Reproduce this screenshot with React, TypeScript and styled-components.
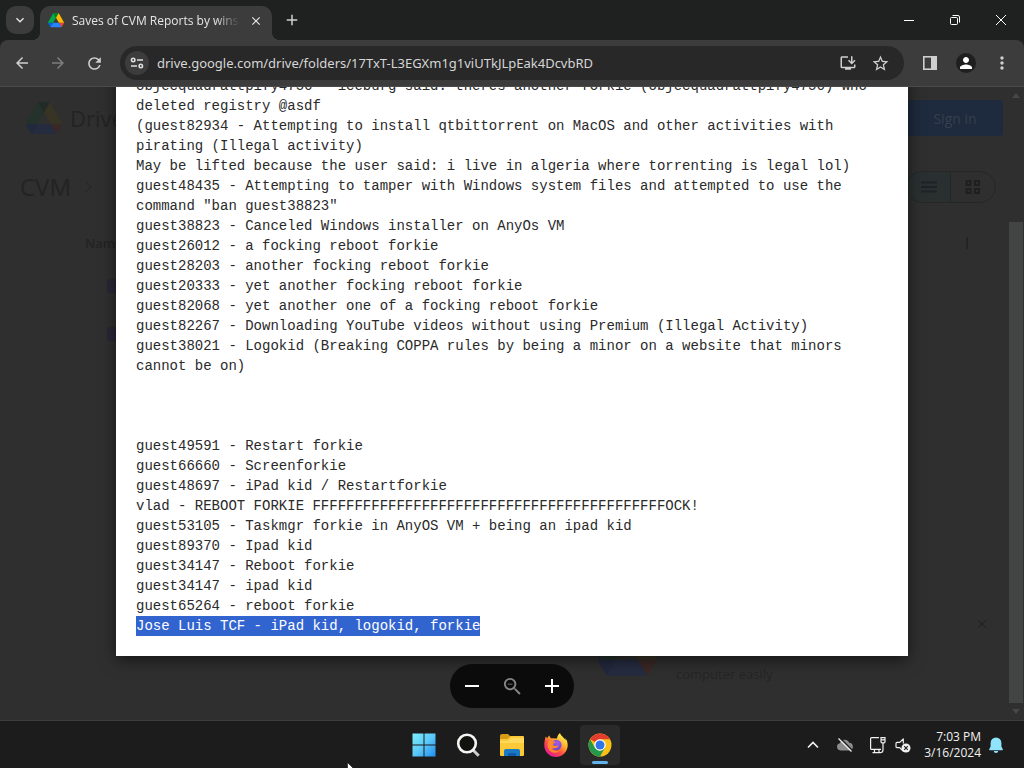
import React from "react";
import styled, { createGlobalStyle, css } from "styled-components";
import {
  MdAdd,
  MdArrowBack,
  MdArrowForward,
  MdClose,
  MdExpandMore,
  MdMoreVert,
  MdOutlineInstallDesktop,
  MdPerson,
  MdRefresh,
  MdRemove,
  MdStarBorder,
  MdZoomOut,
} from "react-icons/md";

const GlobalStyle = createGlobalStyle`
  * { box-sizing: border-box; }
  body {
    margin: 0;
    background: #1c1c1c;
    color: #e6e6e6;
    font-family: "Open Sans", "Noto Sans", sans-serif;
  }
  button {
    border: 0;
    padding: 0;
    background: none;
    color: inherit;
    font: inherit;
  }
  svg { display: block; flex: none; }
`;

const Desktop = styled.div`
  position: relative;
  display: flex;
  flex-direction: column;
  height: 100vh;
  overflow: hidden;
`;

/* ---------- Browser chrome ---------- */

const TabStrip = styled.header`
  display: flex;
  align-items: center;
  height: 40px;
  padding-left: 6px;
  background: #1f2020;
`;

const TabSearch = styled.button`
  display: grid;
  place-items: center;
  width: 28px;
  height: 28px;
  border-radius: 10px;
  background: #3c3c3c;
`;

const Tab = styled.div`
  position: relative;
  display: flex;
  align-items: center;
  gap: 8px;
  align-self: flex-end;
  width: 232px;
  height: 34px;
  margin-left: 6px;
  padding: 0 8px 5px;
  border-radius: 10px 10px 0 0;
  background: #3c3c3c;

  &::before,
  &::after {
    content: "";
    position: absolute;
    bottom: 0;
    width: 8px;
    height: 8px;
  }
  &::before {
    right: 100%;
    background: radial-gradient(circle at 0 0, transparent 8px, #3c3c3c 8px);
  }
  &::after {
    left: 100%;
    background: radial-gradient(circle at 100% 0, transparent 8px, #3c3c3c 8px);
  }
`;

const TabTitle = styled.span`
  flex: 1;
  overflow: hidden;
  white-space: nowrap;
  font-size: 12px;
  line-height: 16px;
  mask-image: linear-gradient(90deg, #000 85%, transparent);
`;

const TabButton = styled.button`
  display: grid;
  place-items: center;
  width: 16px;
  height: 16px;
`;

const NewTab = styled.button`
  display: grid;
  place-items: center;
  width: 28px;
  height: 28px;
  margin-left: 6px;
  color: #d0d0d0;
`;

const WindowControls = styled.div`
  display: flex;
  margin-left: auto;
`;

const WindowButton = styled.button`
  display: grid;
  place-items: center;
  width: 46px;
  height: 40px;
  color: #fff;
`;

const ToolbarBack = styled.div`
  background: #1f2020;
`;

const Toolbar = styled.nav`
  display: flex;
  align-items: center;
  height: 47px;
  padding: 0 4px;
  border-bottom: 1px solid #4a4a4a;
  border-radius: 8px 8px 0 0;
  background: #3c3c3c;
`;

const ToolButton = styled.button<{ $dim?: boolean }>`
  display: grid;
  place-items: center;
  flex: none;
  width: 36px;
  height: 34px;
  color: ${(p) => (p.$dim ? "#7d7d7d" : "#cfcfcf")};
`;

const Omnibox = styled.div`
  display: flex;
  align-items: center;
  flex: 1;
  height: 34px;
  margin: 0 8px;
  padding: 0 8px 0 5px;
  border-radius: 17px;
  background: #282828;
`;

const SiteInfo = styled.button`
  display: grid;
  place-items: center;
  width: 24px;
  height: 24px;
  border-radius: 12px;
  background: #3c3c3c;
`;

const Address = styled.input`
  flex: 1;
  min-width: 0;
  height: 24px;
  padding: 0 8px;
  border: 0;
  outline: 0;
  background: none;
  color: #d6d6d6;
  font-family: "Noto Sans", "Open Sans", sans-serif;
  font-size: 13px;
`;

const OmniAction = styled.button`
  display: grid;
  place-items: center;
  width: 32px;
  height: 32px;
  color: #cfcfcf;
`;

const Avatar = styled.span`
  display: grid;
  place-items: center;
  width: 20px;
  height: 20px;
  border-radius: 50%;
  background: #1f1f1f;
  color: #fff;
`;

/* ---------- Dimmed Drive page ---------- */

const Viewport = styled.main`
  position: relative;
  flex: 1;
  min-height: 0;
  overflow: hidden;
  background: #2f2f2f;
`;

const DrivePage = styled.div`
  display: flex;
  height: 100%;
`;

const DriveContent = styled.div`
  display: flex;
  flex-direction: column;
  flex: 1;
  color: #232323;
`;

const DriveHeader = styled.div`
  display: flex;
  align-items: center;
  gap: 8px;
  height: 62px;
  padding: 0 5px 0 26px;
`;

const DriveName = styled.span`
  font-size: 22px;
  line-height: 28px;
`;

const SignIn = styled.button`
  width: 96px;
  height: 36px;
  margin-left: auto;
  border-radius: 4px;
  background: #1e2a3d;
  color: #35404f;
  font-size: 14px;
`;

const CrumbRow = styled.div`
  display: flex;
  align-items: center;
  height: 76px;
  padding: 0 8px 0 20px;
`;

const Crumb = styled.span`
  margin-right: 14px;
  font-size: 24px;
  line-height: 28px;
`;

const ViewToggle = styled.div`
  display: flex;
  margin-left: auto;
  margin-right: 4px;
  border: 1px solid #252727;
  border-radius: 16px;
  overflow: hidden;
`;

const ViewButton = styled.button<{ $on?: boolean }>`
  display: grid;
  place-items: center;
  width: 44px;
  height: 30px;
  ${(p) =>
    p.$on &&
    css`
      border-right: 1px solid #252727;
      background: #2a3030;
    `}
`;

const ListHead = styled.div`
  display: flex;
  justify-content: space-between;
  align-items: center;
  height: 36px;
  padding: 0 40px 0 85px;
  font-size: 13px;
  font-weight: 600;
`;

const Divider = styled.span`
  width: 2px;
  height: 12px;
  background: #242424;
`;

const FileList = styled.div`
  display: flex;
  flex-direction: column;
  gap: 34px;
  padding: 18px 0 0 107px;
`;

const FileIcon = styled.span`
  width: 16px;
  height: 14px;
  border-radius: 2px;
  background: #272738;
`;

const Promo = styled.aside`
  display: flex;
  gap: 20px;
  height: 110px;
  margin-top: auto;
  padding: 6px 17px 0 0;
  justify-content: flex-end;
`;

const PromoText = styled.p`
  flex: none;
  width: 259px;
  margin: 0;
  padding-top: 50px;
  font-size: 13px;
  line-height: 16px;
  color: #252525;
`;

const PromoLogo = styled.div`
  padding-top: 8px;
`;

const PromoClose = styled.button`
  align-self: flex-start;
  width: 16px;
  height: 16px;
  margin-left: 20px;
`;

const ScrollTrack = styled.div`
  display: flex;
  flex-direction: column;
  align-items: center;
  flex: none;
  width: 16px;
  padding: 6px 0;
`;

const ScrollThumb = styled.div`
  flex: 1;
  width: 14px;
  margin: 124px 0 6px;
  background: #434444;
`;

/* ---------- Text preview ---------- */

const Preview = styled.div`
  position: absolute;
  inset: 0;
  display: flex;
  flex-direction: column;
  justify-content: flex-end;
  align-items: center;
  padding-bottom: 12px;
`;

const Paper = styled.article`
  width: calc(100% - 232px);
  max-width: 792px;
  padding: 20px;
  background: #fff;
  box-shadow: 0 4px 14px rgba(0, 0, 0, 0.55);
  color: #2a2a2a;
  font-family: "Liberation Mono", monospace;
  font-size: 14px;
  line-height: 20px;
`;

const Line = styled.p`
  min-height: 20px;
  margin: 0;
  overflow-wrap: anywhere;
`;

const Selected = styled.mark`
  display: inline-block;
  background: #3264d0;
  color: #fff;
`;

const ZoomBar = styled.div`
  display: flex;
  align-items: center;
  justify-content: space-between;
  flex: none;
  width: 124px;
  height: 44px;
  margin-top: 8px;
  padding: 0 8px;
  border-radius: 22px;
  background: #0b0b0b;
`;

const ZoomButton = styled.button<{ $dim?: boolean }>`
  display: grid;
  place-items: center;
  width: 28px;
  height: 28px;
  color: ${(p) => (p.$dim ? "#858585" : "#fff")};
`;

/* ---------- Taskbar ---------- */

const Taskbar = styled.footer`
  display: grid;
  grid-template-columns: 1fr auto 1fr;
  align-items: center;
  flex: none;
  height: 48px;
  border-top: 1px solid #3d3d3d;
  background: #1c1c1c;
`;

const Apps = styled.div`
  grid-column: 2;
  display: flex;
  gap: 4px;
`;

const AppButton = styled.button<{ $active?: boolean }>`
  position: relative;
  display: grid;
  place-items: center;
  width: 40px;
  height: 40px;
  border-radius: 4px;
  ${(p) =>
    p.$active &&
    css`
      background: #2a2a2a;
      &::after {
        content: "";
        position: absolute;
        left: 12px;
        bottom: 1px;
        width: 16px;
        height: 3px;
        border-radius: 2px;
        background: #5fb2e8;
      }
    `}
`;

const Tray = styled.div`
  display: flex;
  align-items: center;
  justify-content: flex-end;
  padding-right: 20px;
`;

const TrayButton = styled.button<{ $w?: number }>`
  display: grid;
  place-items: center;
  flex: none;
  width: ${(p) => p.$w ?? 26}px;
  height: 40px;
  color: #f2f2f2;
`;

const Clock = styled.time`
  width: 68px;
  margin-right: 7px;
  color: #f2f2f2;
  font-size: 12px;
  line-height: 16px;
  text-align: right;
  white-space: nowrap;
`;

const Pointer = styled.svg`
  position: absolute;
  left: 347px;
  bottom: -12px;
`;

/* ---------- Drawings ---------- */

const DriveLogo = ({ size, dim }: { size: number; dim?: boolean }) => {
  const c = dim
    ? { g: "#23322a", y: "#383425", b: "#252c40", r: "#3a2826", d: "#22283e", e: "#212c26" }
    : { g: "#00ac47", y: "#ffba00", b: "#2684fc", r: "#ea4335", d: "#0066da", e: "#00832d" };
  return (
    <svg width={size} height={size * 0.9} viewBox="0 0 87.3 78" aria-hidden="true">
      <path fill={c.d} d="m6.6 66.85 3.85 6.65c.8 1.4 1.95 2.5 3.3 3.3l13.75-23.8h-27.5c0 1.55.4 3.1 1.2 4.5z" />
      <path fill={c.g} d="m43.65 25-13.75-23.8c-1.35.8-2.5 1.9-3.3 3.3l-25.4 44a9.06 9.06 0 0 0 -1.2 4.5h27.5z" />
      <path fill={c.r} d="m73.55 76.8c1.35-.8 2.5-1.9 3.3-3.3l1.6-2.75 7.65-13.25c.8-1.4 1.2-2.95 1.2-4.5h-27.5l5.85 11.5z" />
      <path fill={c.e} d="m43.65 25 13.75-23.8c-1.35-.8-2.9-1.2-4.5-1.2h-18.5c-1.6 0-3.15.45-4.5 1.2z" />
      <path fill={c.b} d="m59.8 53h-32.3l-13.75 23.8c1.35.8 2.9 1.2 4.5 1.2h50.8c1.6 0 3.15-.45 4.5-1.2z" />
      <path fill={c.y} d="m73.4 26.5-12.7-22c-.8-1.4-1.95-2.5-3.3-3.3l-13.75 23.8 16.15 28h27.45c0-1.55-.4-3.1-1.2-4.5z" />
    </svg>
  );
};

const SiteControlsIcon = () => (
  <svg width="14" height="14" viewBox="0 0 14 14" fill="none" stroke="#dedede" strokeWidth="1.6">
    <circle cx="3.2" cy="4" r="1.7" />
    <path d="M7 4h6M1 10h6" />
    <circle cx="10.8" cy="10" r="1.7" />
  </svg>
);

const SidePanelIcon = () => (
  <svg width="16" height="16" viewBox="0 0 16 16">
    <rect x="1.8" y="1.8" width="12.4" height="12.4" fill="none" stroke="#cfcfcf" strokeWidth="1.6" />
    <path fill="#cfcfcf" d="M9 2h5v12H9z" />
  </svg>
);

const WindowsLogo = () => (
  <svg width="24" height="24" viewBox="0 0 24 24">
    <defs>
      <linearGradient id="win" x1="0" y1="0" x2="24" y2="24" gradientUnits="userSpaceOnUse">
        <stop offset="0" stopColor="#7df0fb" />
        <stop offset=".5" stopColor="#5bc9f8" />
        <stop offset="1" stopColor="#1d8bee" />
      </linearGradient>
    </defs>
    <path fill="url(#win)" d="M.5.5h11v11H.5zM12.5.5h11v11h-11zM.5 12.5h11v11H.5zM12.5 12.5h11v11h-11z" />
  </svg>
);

const SearchLogo = () => (
  <svg width="24" height="24" viewBox="0 0 24 24" fill="none">
    <path d="M17 17l5.700 5.700" stroke="#cfcfcf" strokeWidth="3" />
    <circle cx="11" cy="10.500" r="8.800" fill="#11120e" stroke="#f5f5f5" strokeWidth="2.600" />
  </svg>
);

const FolderLogo = () => (
  <svg width="26" height="24" viewBox="0 0 26 24">
    <path fill="#d79b16" d="M1 3q0-2 2-2h6l3 3v4H1z" />
    <path fill="#fbc938" d="M1 7q0-1 1-1h6.500l3-3H24q1 0 1 1v18q0 1-1 1H2q-1 0-1-1z" />
    <path fill="#ffd95c" d="M1 8h8l3-3h13v5H1z" />
    <path fill="#1979c4" d="M5 23v-5q0-2 2-2h12q2 0 2 2v5z" />
    <path fill="#0f5da8" d="M9 20h8v3H9z" />
  </svg>
);

const FirefoxLogo = () => (
  <svg width="24" height="24" viewBox="0 0 24 24">
    <defs>
      <linearGradient id="fox" x1="19" y1="2" x2="5" y2="21" gradientUnits="userSpaceOnUse">
        <stop offset="0" stopColor="#fff04a" />
        <stop offset=".35" stopColor="#ffb02e" />
        <stop offset=".65" stopColor="#ff5040" />
        <stop offset="1" stopColor="#e4208c" />
      </linearGradient>
      <radialGradient id="globe" cx=".6" cy=".3" r=".8">
        <stop offset="0" stopColor="#a45bea" />
        <stop offset="1" stopColor="#5a45c8" />
      </radialGradient>
    </defs>
    <path
      fill="url(#fox)"
      d="M16 0c-2 1.500-3 3.800-3 5.500L7 5.300C6 4.600 5.500 3.500 5.600 2.600 4.300 3.300 3.600 4.400 3.300 5.300L1.700 3.600C.8 6.500.3 9.500.3 12.200.3 18.800 5.500 24 12 24s11.700-5.200 11.700-11.700c0-3-1-5.700-2.400-7.300.2 1 .3 1.700.2 2.300C20 4.200 16.700 3 16 0z"
    />
    <circle cx="12.300" cy="12" r="5.300" fill="url(#globe)" />
    <path
      fill="#ff8a2b"
      d="M4.300 8.500c1.400-1 3-1 4.200-.2 1 .2 2 .2 2.800.3.300 1-.8 1.700-2.200 2.200-.8.600.2 1.800 1.900 2.100 1.400.3 2.300-.6 3.500-.2-1 2.500-4.500 3.600-7.200 2.200 2 3 6.500 4 9.700 1.400-3 5-10.800 4.500-12.800-1-.8-2.200-.6-4.800.1-6.800z"
    />
  </svg>
);

const ChromeLogo = () => (
  <svg width="24" height="24" viewBox="0 0 48 48">
    <circle cx="24" cy="24" r="23" fill="#fbc116" />
    <path fill="#e33b2e" d="M4.100 12.500A23 23 0 0 1 43.900 12.500H24A11.500 11.500 0 0 0 14 18.200z" />
    <path fill="#239a4b" d="M4.100 12.500 14 29.700A11.500 11.500 0 0 0 24 35.500h4L24 47A23 23 0 0 1 4.100 12.500z" />
    <path fill="#239a4b" d="M24 35.500 34 29.700 24 47z" />
    <circle cx="24" cy="24" r="11.500" fill="#fff" />
    <circle cx="24" cy="24" r="9" fill="#2f74e8" />
  </svg>
);

const CloudOffIcon = () => (
  <svg width="18" height="16" viewBox="0 0 18 16">
    <path fill="#8d8d8d" d="M4.500 13.500a3.700 3.700 0 0 1-.6-7.300 5 5 0 0 1 9.300-.4 3.900 3.900 0 0 1 .6 7.700z" />
    <path d="M4 1l13 13" stroke="#1c1c1c" strokeWidth="1.500" />
    <path d="M2.500 1.500l13 13" stroke="#f0f0f0" strokeWidth="1.300" />
  </svg>
);

const NetworkIcon = () => (
  <svg width="17" height="18" viewBox="0 0 17 18" fill="none" stroke="#f2f2f2" strokeWidth="1.200">
    <path d="M10 1.600H2.600q-1 0-1 1v9.800q0 1 1 1H12M5.500 13.500v3M10 13.500v3M3.500 16.600H12" />
    <path d="M12 1.600h4v4.200q0 1-1 1h-2q-1 0-1-1zM12 3.800h4M14 7v6.500q0 3-2 3" />
  </svg>
);

const MutedIcon = () => (
  <svg width="16" height="16" viewBox="0 0 16 16">
    <path
      d="M8 14 4.700 10.600H2q-1 0-1-1V6.400q0-1 1-1h2.700L8.300 2v4.500"
      fill="none"
      stroke="#f2f2f2"
      strokeWidth="1.200"
      strokeLinejoin="round"
    />
    <circle cx="11" cy="11" r="4.500" fill="#f2f2f2" />
    <path d="m9.200 9.200 3.600 3.600m0-3.600-3.600 3.600" stroke="#1c1c1c" strokeWidth="1.100" />
  </svg>
);

const BellIcon = () => (
  <svg width="16" height="18" viewBox="0 0 16 18">
    <path
      fill="#8fe4fb"
      d="M8 1.500a5.400 5.400 0 0 0-5.400 5.400v3.600L1.200 13.300q-.3.900.6.900h12.400q.9 0 .6-.9l-1.400-2.800V6.900A5.400 5.400 0 0 0 8 1.500zM5.800 15h4.400a2.200 2 0 0 1-4.400 0z"
    />
  </svg>
);

/* ---------- Content ---------- */

const logLines = [
  "objecquadrattpify4756 - iceburg said: theres another forkie (objecquadrattpify4756) who deleted registry @asdf",
  "(guest82934 - Attempting to install qtbittorrent on MacOS and other activities with pirating (Illegal activity)",
  "May be lifted because the user said: i live in algeria where torrenting is legal lol)",
  "guest48435 - Attempting to tamper with Windows system files and attempted to use the command \"ban guest38823\"",
  "guest38823 - Canceled Windows installer on AnyOs VM",
  "guest26012 - a focking reboot forkie",
  "guest28203 - another focking reboot forkie",
  "guest20333 - yet another focking reboot forkie",
  "guest82068 - yet another one of a focking reboot forkie",
  "guest82267 - Downloading YouTube videos without using Premium (Illegal Activity)",
  "guest38021 - Logokid (Breaking COPPA rules by being a minor on a website that minors cannot be on)",
  "",
  "",
  "",
  "guest49591 - Restart forkie",
  "guest66660 - Screenforkie",
  "guest48697 - iPad kid / Restartforkie",
  "vlad - REBOOT FORKIE " + "F".repeat(42) + "OCK!",
  "guest53105 - Taskmgr forkie in AnyOS VM + being an ipad kid",
  "guest89370 - Ipad kid",
  "guest34147 - Reboot forkie",
  "guest34147 - ipad kid",
  "guest65264 - reboot forkie",
];

export default function App() {
  return (
    <>
      <GlobalStyle />
      <Desktop>
        <TabStrip>
          <TabSearch aria-label="Search tabs">
            <MdExpandMore size={16} />
          </TabSearch>
          <Tab>
            <DriveLogo size={16} />
            <TabTitle>Saves of CVM Reports by winser</TabTitle>
            <TabButton aria-label="Close tab">
              <MdClose size={14} />
            </TabButton>
          </Tab>
          <NewTab aria-label="New tab">
            <MdAdd size={18} />
          </NewTab>
          <WindowControls>
            <WindowButton aria-label="Minimize">
              <svg width="10" height="10" viewBox="0 0 10 10">
                <path d="M0 5.500h10" stroke="currentColor" />
              </svg>
            </WindowButton>
            <WindowButton aria-label="Restore">
              <svg width="10" height="10" viewBox="0 0 10 10" fill="none" stroke="currentColor">
                <rect x=".5" y="2.500" width="7" height="7" rx="1" />
                <path d="M2.500.5H8q1.500 0 1.500 1.500v5.500" />
              </svg>
            </WindowButton>
            <WindowButton aria-label="Close">
              <svg width="10" height="10" viewBox="0 0 10 10">
                <path d="M0 0l10 10M10 0L0 10" stroke="currentColor" />
              </svg>
            </WindowButton>
          </WindowControls>
        </TabStrip>

        <ToolbarBack>
          <Toolbar>
            <ToolButton aria-label="Back">
              <MdArrowBack size={18} />
            </ToolButton>
            <ToolButton aria-label="Forward" $dim>
              <MdArrowForward size={18} />
            </ToolButton>
            <ToolButton aria-label="Reload">
              <MdRefresh size={19} />
            </ToolButton>
            <Omnibox>
              <SiteInfo aria-label="View site information">
                <SiteControlsIcon />
              </SiteInfo>
              <Address
                aria-label="Address"
                defaultValue="drive.google.com/drive/folders/17TxT-L3EGXm1g1viUTkJLpEak4DcvbRD"
              />
              <OmniAction aria-label="Install app">
                <MdOutlineInstallDesktop size={18} />
              </OmniAction>
              <OmniAction aria-label="Bookmark">
                <MdStarBorder size={19} />
              </OmniAction>
            </Omnibox>
            <ToolButton aria-label="Side panel">
              <SidePanelIcon />
            </ToolButton>
            <ToolButton aria-label="Profile">
              <Avatar>
                <MdPerson size={18} />
              </Avatar>
            </ToolButton>
            <ToolButton aria-label="Menu">
              <MdMoreVert size={20} />
            </ToolButton>
          </Toolbar>
        </ToolbarBack>

        <Viewport>
          <DrivePage>
            <DriveContent>
              <DriveHeader>
                <DriveLogo size={36} dim />
                <DriveName>Drive</DriveName>
                <SignIn>Sign in</SignIn>
              </DriveHeader>
              <CrumbRow>
                <Crumb>CVM</Crumb>
                <svg width="8" height="12" viewBox="0 0 8 12">
                  <path d="m1 1 5 5-5 5" fill="none" stroke="#292929" strokeWidth="1.500" />
                </svg>
                <ViewToggle>
                  <ViewButton aria-label="List layout" $on>
                    <svg width="16" height="12" viewBox="0 0 16 12">
                      <path d="M0 1.500h16M0 6h16M0 10.500h16" stroke="#1d2427" strokeWidth="2" />
                    </svg>
                  </ViewButton>
                  <ViewButton aria-label="Grid layout">
                    <svg width="16" height="14" viewBox="0 0 16 14" fill="none" stroke="#1f1f1f" strokeWidth="2">
                      <path d="M1.500 1h4v4h-4zM10 1h4v4h-4zM1.500 9h4v4h-4zM10 9h4v4h-4z" />
                    </svg>
                  </ViewButton>
                </ViewToggle>
              </CrumbRow>
              <ListHead>
                <span>Name</span>
                <Divider />
              </ListHead>
              <FileList>
                <FileIcon />
                <FileIcon />
              </FileList>
              <Promo>
                <PromoLogo>
                  <DriveLogo size={58} dim />
                </PromoLogo>
                <PromoText>computer easily</PromoText>
                <PromoClose aria-label="Dismiss">
                  <MdClose size={14} />
                </PromoClose>
              </Promo>
            </DriveContent>
            <ScrollTrack>
              <svg width="8" height="5" viewBox="0 0 8 5">
                <path d="M4 0l4 5H0z" fill="#474747" />
              </svg>
              <ScrollThumb />
              <svg width="8" height="5" viewBox="0 0 8 5">
                <path d="M4 5l4-5H0z" fill="#474747" />
              </svg>
            </ScrollTrack>
          </DrivePage>

          <Preview>
            <Paper>
              {logLines.map((line, i) => (
                <Line key={i}>{line}</Line>
              ))}
              <Line>
                <Selected>Jose Luis TCF - iPad kid, logokid, forkie</Selected>
              </Line>
            </Paper>
            <ZoomBar>
              <ZoomButton aria-label="Zoom out">
                <MdRemove size={24} />
              </ZoomButton>
              <ZoomButton aria-label="Reset zoom" $dim>
                <MdZoomOut size={23} />
              </ZoomButton>
              <ZoomButton aria-label="Zoom in">
                <MdAdd size={24} />
              </ZoomButton>
            </ZoomBar>
          </Preview>
        </Viewport>

        <Taskbar>
          <Apps>
            <AppButton aria-label="Start">
              <WindowsLogo />
            </AppButton>
            <AppButton aria-label="Search">
              <SearchLogo />
            </AppButton>
            <AppButton aria-label="File Explorer">
              <FolderLogo />
            </AppButton>
            <AppButton aria-label="Firefox">
              <FirefoxLogo />
            </AppButton>
            <AppButton aria-label="Chrome" $active>
              <ChromeLogo />
            </AppButton>
          </Apps>
          <Tray>
            <TrayButton aria-label="Show hidden icons" $w={32}>
              <svg width="12" height="8" viewBox="0 0 12 8">
                <path d="m1 6.500 5-5 5 5" fill="none" stroke="currentColor" strokeWidth="1.600" />
              </svg>
            </TrayButton>
            <TrayButton aria-label="OneDrive" $w={32}>
              <CloudOffIcon />
            </TrayButton>
            <TrayButton aria-label="Network" $w={32}>
              <NetworkIcon />
            </TrayButton>
            <TrayButton aria-label="Volume" $w={20}>
              <MutedIcon />
            </TrayButton>
            <Clock>
              7:03 PM
              <br />
              3/16/2024
            </Clock>
            <TrayButton aria-label="Notifications" $w={16}>
              <BellIcon />
            </TrayButton>
          </Tray>
        </Taskbar>

        <Pointer width="12" height="18" viewBox="0 0 12 18" aria-hidden="true">
          <path d="M.5.5v15l3.500-3.500 2.500 5 2-1-2.500-5h5z" fill="#fff" stroke="#111" strokeWidth=".6" />
        </Pointer>
      </Desktop>
    </>
  );
}
